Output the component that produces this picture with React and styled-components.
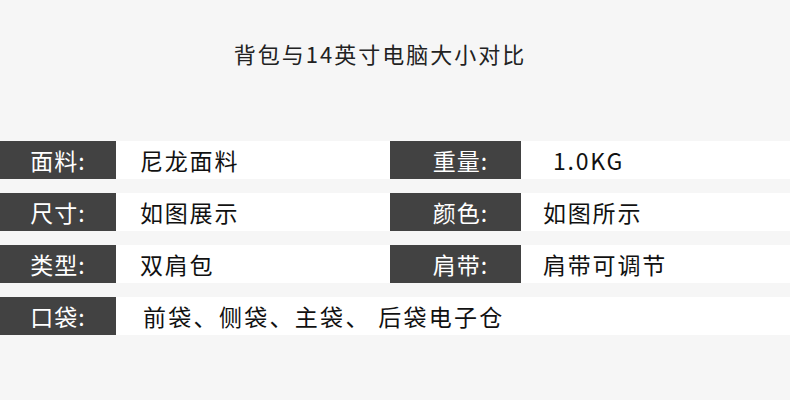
import styled, { createGlobalStyle } from "styled-components";

const GlobalStyle = createGlobalStyle`
  body {
    margin: 0;
    background-color: #f6f6f6;
    font-family: "Noto Sans CJK SC", "Noto Sans", sans-serif;
  }
`;

const Page = styled.div`
  width: 790px;
  height: 400px;
  background-color: #f6f6f6;
  overflow: hidden;
`;

const Title = styled.h1`
  margin: 0;
  padding-top: 38px;
  padding-right: 30px;
  height: 141px;
  box-sizing: border-box;
  text-align: center;
  font-size: 22px;
  font-weight: 400;
  line-height: 30px;
  letter-spacing: 2px;
  color: #222;
`;

const Table = styled.div`
  display: flex;
  flex-direction: column;
  gap: 14px;
`;

const Row = styled.div`
  display: flex;
  height: 38px;
  background-color: #fff;
`;

const Label = styled.div`
  width: ${(props) => props.width}px;
  box-sizing: border-box;
  padding-left: ${(props) => props.shift || 0}px;
  background-color: #424242;
  color: #fff;
  font-size: 23px;
  line-height: 38px;
  text-align: center;
  letter-spacing: 1px;
`;

const Value = styled.div`
  width: ${(props) => (props.width ? `${props.width}px` : "auto")};
  flex: ${(props) => (props.width ? "none" : 1)};
  box-sizing: border-box;
  padding-left: ${(props) => props.indent}px;
  color: #111;
  font-size: 23px;
  line-height: 38px;
  letter-spacing: ${(props) => props.spacing || 1.8}px;
  white-space: nowrap;
`;

const rows = [
  { l: "面料:", v: "尼龙面料", r: "重量:", rv: "1.0KG", ri: 32 },
  { l: "尺寸:", v: "如图展示", r: "颜色:", rv: "如图所示", ri: 22 },
  { l: "类型:", v: "双肩包", r: "肩带:", rv: "肩带可调节", ri: 22 },
  { l: "口袋:", v: "前袋、侧袋、主袋、 后袋电子仓" },
];

function App() {
  return (
    <Page>
      <GlobalStyle />
      <Title>背包与14英寸电脑大小对比</Title>
      <Table>
        {rows.map((row) => (
          <Row key={row.l}>
            <Label width={116}>{row.l}</Label>
            {row.r ? (
              <>
                <Value width={274} indent={24}>
                  {row.v}
                </Value>
                <Label width={131} shift={10}>
                  {row.r}
                </Label>
                <Value indent={row.ri}>{row.rv}</Value>
              </>
            ) : (
              <Value indent={27} spacing={2.3}>
                {row.v}
              </Value>
            )}
          </Row>
        ))}
      </Table>
    </Page>
  );
}

export default App;
